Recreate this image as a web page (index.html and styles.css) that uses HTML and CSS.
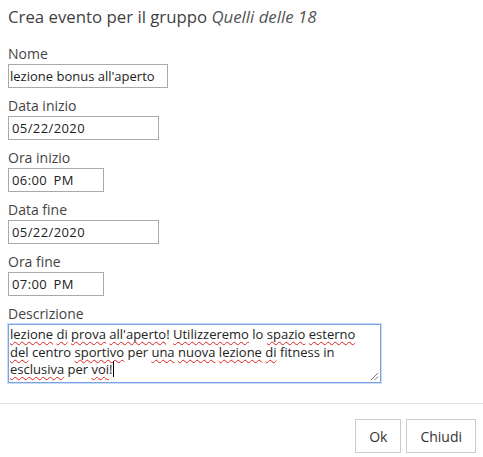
FILE: index.html
```html
<!DOCTYPE html>
<html lang="it">
<head>
<meta charset="utf-8">
<title>Crea evento</title>
<link rel="stylesheet" href="styles.css">
</head>
<body>
<div class="dialog">
  <div class="body">
    <h1 class="title">Crea evento per il gruppo <em>Quelli delle 18</em></h1>
    <div class="field">
      <label class="label">Nome</label>
      <input class="input w-name" type="text" value="lezione bonus all'aperto">
    </div>
    <div class="field">
      <label class="label">Data inizio</label>
      <input class="input w-date mono" type="text" value="05/22/2020">
    </div>
    <div class="field">
      <label class="label">Ora inizio</label>
      <input class="input w-time mono time" type="text" value="06:00 PM">
    </div>
    <div class="field">
      <label class="label">Data fine</label>
      <input class="input w-date mono" type="text" value="05/22/2020">
    </div>
    <div class="field">
      <label class="label">Ora fine</label>
      <input class="input w-time mono time" type="text" value="07:00 PM">
    </div>
    <div class="field last">
      <label class="label">Descrizione</label>
      <div class="textarea"><span class="sp">lezione</span> <span class="sp">di</span> <span class="sp">prova</span> <span class="sp">all'aperto</span>! <span class="sp">Utilizzeremo</span> lo <span class="sp">spazio</span> <span class="sp">esterno</span> <span class="sp">del</span> centro <span class="sp">sportivo</span> per <span class="sp">una</span> <span class="sp">nuova</span> <span class="sp">lezione</span> <span class="sp">di</span> fitness in <span class="sp">esclusiva</span> per <span class="sp">voi</span>!<span class="caret"></span><svg class="grip" width="9" height="9" viewBox="0 0 9 9"><path d="M1 8 L8 1 M4.5 8 L8 4.5" stroke="#777" stroke-width="1" fill="none"/></svg></div>
    </div>
  </div>
  <div class="footer">
    <button class="btn">Ok</button>
    <button class="btn">Chiudi</button>
  </div>
</div>
</body>
</html>
```
FILE: styles.css
```css
html, body {
  margin: 0;
  padding: 0;
  background: #fff;
}
body {
  font-family: "Open Sans", "DejaVu Sans", sans-serif;
  color: #444;
}
.dialog {
  width: 483px;
}
.body {
  padding: 6px 8px 0 8px;
}
.title {
  margin: 0 0 16px 0;
  font-size: 16.8px;
  line-height: 22px;
  font-weight: 400;
  color: #3f3f3f;
}
.title em {
  font-style: italic;
  color: #555;
}
.field {
  display: flex;
  flex-direction: column;
  align-items: flex-start;
  margin-bottom: 8px;
}
.field.last {
  margin-bottom: 0;
}
.label {
  font-size: 14px;
  line-height: 20px;
  height: 20px;
  color: #444;
}
.input {
  box-sizing: border-box;
  height: 24px;
  margin: 0;
  border: 1px solid #a9a9a9;
  border-radius: 0;
  padding: 0 1px;
  font-family: "Open Sans", "DejaVu Sans", sans-serif;
  font-size: 13px;
  color: #222;
  background: #fff;
  outline: none;
}
.input.mono {
  padding-left: 3px;
  letter-spacing: 0.4px;
}
.input.time {
  word-spacing: 2.5px;
}
.w-name { width: 160px; }
.w-date { width: 151px; }
.w-time { width: 96px; }
.textarea {
  position: relative;
  box-sizing: border-box;
  width: 373px;
  height: 59px;
  border: 1px solid #7aa3e6;
  box-shadow: 0 0 0 1px #c9dbf6;
  padding: 1px 14px 2px 1px;
  font-size: 13px;
  line-height: 17.7px;
  color: #222;
  overflow: hidden;
}
.sp {
  text-decoration: underline wavy #e02020;
  text-decoration-thickness: 1px;
  text-underline-offset: 2px;
  text-decoration-skip-ink: none;
}
.caret {
  display: inline-block;
  width: 0;
  height: 16px;
  border-left: 1px solid #000;
  vertical-align: -3px;
}
.grip {
  position: absolute;
  right: 1px;
  bottom: 1px;
}
.footer {
  margin-top: 20px;
  border-top: 1px solid #e5e5e5;
  padding: 15px 7px 4px 8px;
  display: flex;
  justify-content: flex-end;
  gap: 5px;
}
.btn {
  box-sizing: border-box;
  height: 34px;
  padding: 0 13px;
  margin: 0;
  border: 1px solid #ccc;
  border-radius: 0;
  background: #fff;
  font-family: "Open Sans", "DejaVu Sans", sans-serif;
  font-size: 14px;
  color: #333;
}
```
